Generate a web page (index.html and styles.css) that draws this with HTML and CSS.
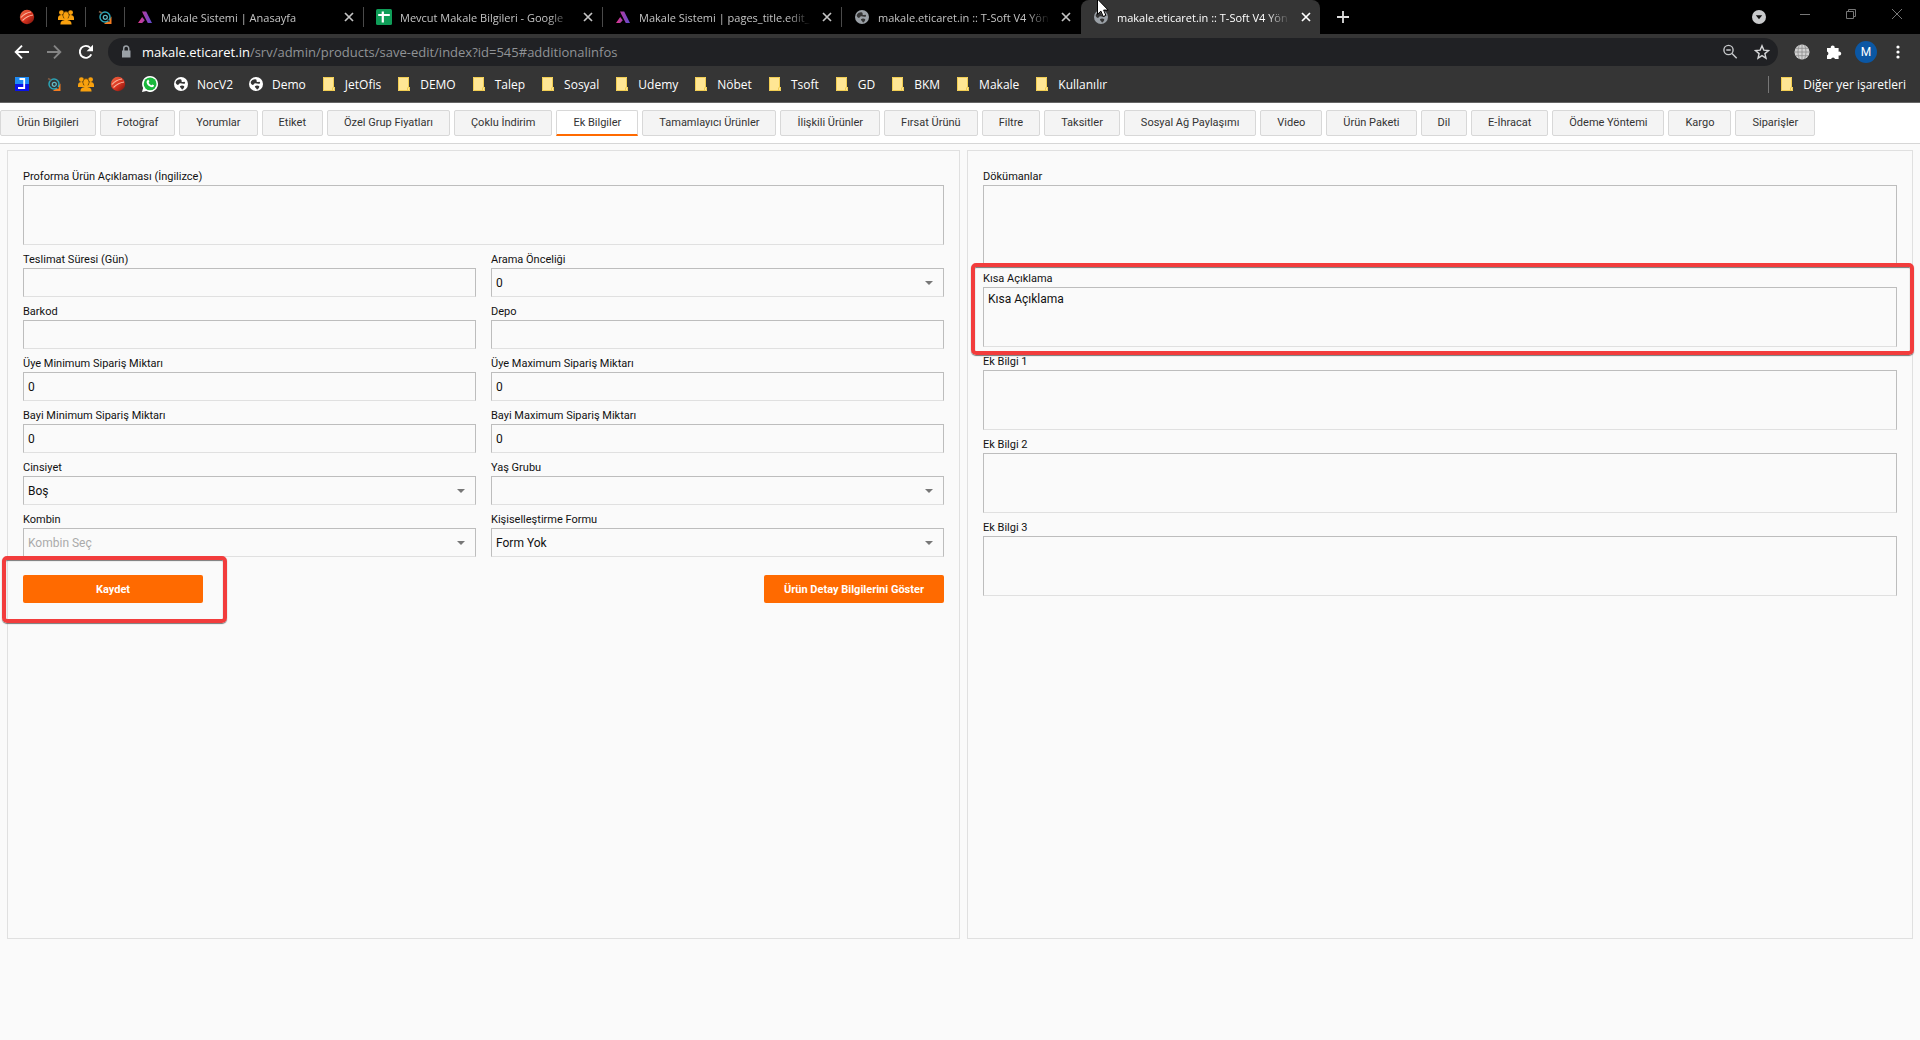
FILE: index.html
```html
<!DOCTYPE html>
<html lang="tr">
<head>
<meta charset="utf-8">
<title>makale.eticaret.in :: T-Soft V4 Yönetim</title>
<meta name="viewport" content="width=device-width, initial-scale=1">
<link rel="stylesheet" href="styles.css">
</head>
<body>
<svg class="sprite" aria-hidden="true">
  <symbol id="ball" viewBox="0 0 16 16">
    <linearGradient id="bg" x1="0" y1="0" x2="1" y2="1"><stop offset="0" stop-color="#ef6b45"/><stop offset=".55" stop-color="#d8321f"/><stop offset="1" stop-color="#6e120c"/></linearGradient>
    <circle cx="8" cy="8" r="7.200" fill="url(#bg)"/>
    <path d="M2 8.500C5 5 8 3.500 12 3M3.500 11.500C7 8 10 6.500 14 6" fill="none" stroke="#f9b49c" stroke-width="1.100"/>
  </symbol>
  <symbol id="people" viewBox="0 0 16 16">
    <g fill="#f9a10e">
      <circle cx="3.400" cy="3.600" r="2.400"/><circle cx="12.600" cy="3.600" r="2.400"/>
      <path d="M0 11V9c0-2 1.500-3 3.400-3S7 7 7 9v2zM9 11V9c0-2 1.700-3 3.600-3S16 7 16 9v2z"/>
      <ellipse cx="8" cy="6.300" rx="3.100" ry="3.700" stroke="#3a2a08" stroke-width=".6"/>
      <path d="M2.400 15.500c0-3 1.600-3.900 3.900-4.200V9h3.400v2.300c2.300.3 3.900 1.200 3.900 4.200z"/>
    </g>
  </symbol>
  <symbol id="search-q" viewBox="0 0 16 16">
    <path d="M7 15h7.500V7.500z" fill="#f47b20"/>
    <circle cx="8" cy="8" r="5" fill="none" stroke="#2ba3b5" stroke-width="1.500"/>
    <circle cx="8.300" cy="8.300" r="2" fill="none" stroke="#5fb9c4" stroke-width="1.300"/>
    <path d="M2 2.500l3 1.500" stroke="#7d5a43" stroke-width="1.600"/>
    <path d="M10 10l2.500 2.500" stroke="#1d3540" stroke-width="1.600"/>
  </symbol>
  <symbol id="lambda" viewBox="0 0 16 16">
    <linearGradient id="lg" x1="0" x2="1"><stop offset="0" stop-color="#e0368c"/><stop offset="1" stop-color="#5b4bd0"/></linearGradient>
    <path d="M5 2.500h4.200L15 14h-4.200L6.400 5.500zM5.200 8l2.600 3.200L5.200 14H1z" fill="url(#lg)"/>
  </symbol>
  <symbol id="sheets" viewBox="0 0 16 16">
    <rect width="16" height="16" rx="1.500" fill="#0f9d58"/>
    <path d="M6.800 2.500v11M2.200 6h11.600" stroke="#fff" stroke-width="2.200"/>
  </symbol>
  <symbol id="globe" viewBox="0 0 16 16">
    <circle cx="8" cy="8" r="7" fill="currentColor"/>
    <path d="M3 5.500c1.300-1.800 3.200-2.500 5-2 1.300.5 0 1.500.8 2.200 1 .8 1.800-.5 2.900.2.900.7.200 1.800-1 1.900-1.700.1-2.900-.8-4.200-.3-.9.400-.6 1.400-1.600 1.400S2 7.200 3 5.500zM7 10.300c1-1 3-.9 4-.2.800.8-.3 2-1 3-.6.700-1.400.5-1.600-.4-.2-.8-1.900-1.500-1.400-2.400z" class="cut"/>
  </symbol>
  <symbol id="close" viewBox="0 0 16 16"><path d="M4 4l8 8M12 4l-8 8" stroke="currentColor" stroke-width="1.700"/></symbol>
  <symbol id="folder" viewBox="0 0 16 16">
    <path d="M2 1h11v10h1v4H2z" fill="#ffe694"/><path d="M2.500 1.500h10v10h1v3h-11z" fill="none" stroke="#f1cd52"/><path d="M11.500 11.500v3" stroke="#f1cd52"/>
  </symbol>
</svg>

<header class="browser">
  <div class="tabstrip">
    <div class="pin"><svg class="ic"><use href="#ball"/></svg></div>
    <div class="pin"><svg class="ic"><use href="#people"/></svg></div>
    <div class="pin"><svg class="ic"><use href="#search-q"/></svg></div>
    <div class="btab"><svg class="ic"><use href="#lambda"/></svg><span class="btitle">Makale Sistemi | Anasayfa</span><svg class="ic"><use href="#close"/></svg></div>
    <div class="btab"><svg class="ic"><use href="#sheets"/></svg><span class="btitle">Mevcut Makale Bilgileri - Google</span><svg class="ic"><use href="#close"/></svg></div>
    <div class="btab"><svg class="ic"><use href="#lambda"/></svg><span class="btitle">Makale Sistemi | pages_title.edit_</span><svg class="ic"><use href="#close"/></svg></div>
    <div class="btab last"><svg class="ic globe"><use href="#globe"/></svg><span class="btitle">makale.eticaret.in :: T-Soft V4 Yön</span><svg class="ic"><use href="#close"/></svg></div>
    <div class="btab current"><svg class="ic globe"><use href="#globe"/></svg><span class="btitle">makale.eticaret.in :: T-Soft V4 Yön</span><svg class="ic"><use href="#close"/></svg></div>
    <svg class="ic plus" viewBox="0 0 16 16"><path d="M8 2v12M2 8h12" stroke="#dedede" stroke-width="1.800"/></svg>
    <div class="window">
      <svg class="ic" viewBox="0 0 16 16"><circle cx="8" cy="8" r="7" fill="#c9cacc"/><path d="M4.800 6.200h6.400L8 10.200z" fill="#111"/></svg>
      <svg class="ic up" viewBox="0 0 16 16"><path d="M3 8.500h10" stroke="#777"/></svg>
      <svg class="ic up" viewBox="0 0 16 16"><path d="M3.500 5.500h7v7h-7zM5.500 5.500v-2h7v7h-2" fill="none" stroke="#777"/></svg>
      <svg class="ic up" viewBox="0 0 16 16"><path d="M3 3l10 10M13 3L3 13" stroke="#777"/></svg>
    </div>
  </div>

  <div class="toolbar">
    <svg class="ic" viewBox="0 0 16 16"><path d="M15 8H2M8 1.700L1.700 8 8 14.300" fill="none" stroke="#fff" stroke-width="1.900"/></svg>
    <svg class="ic" viewBox="0 0 16 16"><path d="M1 8h13M8 1.700L14.300 8 8 14.300" fill="none" stroke="#858585" stroke-width="1.900"/></svg>
    <svg class="ic" viewBox="0 0 16 16"><path d="M13.300 10.400A6 6 0 1 1 12.300 3.800" fill="none" stroke="#fff" stroke-width="1.900"/><path d="M15 .8v6.400H8.600z" fill="#fff"/></svg>
    <div class="address">
      <svg class="ic" viewBox="0 0 16 16"><path d="M4 6.500h8.500v7H4z" fill="#9aa0a6"/><path d="M5.700 7V4.600a2.500 2.500 0 0 1 5 0V7" fill="none" stroke="#9aa0a6" stroke-width="1.500"/></svg>
      <span class="url"><b>makale.eticaret.in</b>/srv/admin/products/save-edit/index?id=545#additionalinfos</span>
      <svg class="ic" viewBox="0 0 16 16"><circle cx="6.500" cy="6" r="4.600" fill="none" stroke="#c6c8ca" stroke-width="1.400"/><path d="M4.300 6h4.400M10 9.500l4.700 4.700" stroke="#c6c8ca" stroke-width="1.500"/></svg>
      <svg class="ic" viewBox="0 0 16 16"><path d="M8 1.800l1.800 4.300 4.700.4-3.600 3.100 1.100 4.600L8 11.700l-4 2.500 1.100-4.600L1.500 6.500l4.700-.4z" fill="none" stroke="#d5d6d8" stroke-width="1.400"/></svg>
    </div>
    <svg class="ic" viewBox="0 0 16 16"><circle cx="8" cy="8" r="7.500" fill="#d2d2d2"/><path d="M8 .5v15M.5 8h15M2 4.300h12M2 11.700h12M5.500 1c-2 4-2 10 0 14M10.500 1c2 4 2 10 0 14" fill="none" stroke="#8b8b8b" stroke-width=".8"/></svg>
    <svg class="ic" viewBox="0 0 16 16"><path d="M1 4h3.800a2 2 0 1 1 3.800 0h4v3.700a2 2 0 1 1 0 3.800V15H9a2 2 0 0 0-3.900 0H1v-3.600a2 2 0 0 0 0-3.800z" fill="#fff"/></svg>
    <span class="avatar">M</span>
    <svg class="ic" viewBox="0 0 16 16"><g fill="#fff"><circle cx="8" cy="3" r="1.600"/><circle cx="8" cy="8" r="1.600"/><circle cx="8" cy="13" r="1.600"/></g></svg>
  </div>

  <nav class="bookmarks">
    <div class="icons">
      <svg class="ic" viewBox="0 0 16 16"><path d="M1 1h14v14H1z" fill="#0a12e8"/><path d="M1 1h14v7H1z" fill="#1f8bf5"/><path d="M5.500 3h4.700v9H4" fill="none" stroke="#fff" stroke-width="1.800"/></svg>
      <svg class="ic"><use href="#search-q"/></svg>
      <svg class="ic"><use href="#people"/></svg>
      <svg class="ic"><use href="#ball"/></svg>
      <svg class="ic" viewBox="0 0 16 16"><path d="M8 0a8 8 0 1 1-3.700 15.100L0 16l1.100-4A8 8 0 0 1 8 0z" fill="#fff"/><circle cx="8.100" cy="7.900" r="6.400" fill="#19b83c"/><path d="M5.500 4.200c.5-.5 1-.4 1.200.1l.6 1.300c.1.500-.6.900-.7 1.200.6 1.300 1.500 2 2.700 2.500.4-.1.700-1 1.100-.9l1.500.8c.3.300.1 1-.3 1.400-1 .9-2.300.7-3.700 0C6 9.600 4.800 8 4.600 6.600c-.1-1 .3-1.900.9-2.400z" fill="#fff"/></svg>
    </div>
    <a class="mark" href="#"><svg class="ic"><use href="#globe"/></svg>NocV2</a>
    <a class="mark" href="#"><svg class="ic"><use href="#globe"/></svg>Demo</a>
    <a class="mark" href="#"><svg class="ic"><use href="#folder"/></svg>JetOfis</a>
    <a class="mark" href="#"><svg class="ic"><use href="#folder"/></svg>DEMO</a>
    <a class="mark" href="#"><svg class="ic"><use href="#folder"/></svg>Talep</a>
    <a class="mark" href="#"><svg class="ic"><use href="#folder"/></svg>Sosyal</a>
    <a class="mark" href="#"><svg class="ic"><use href="#folder"/></svg>Udemy</a>
    <a class="mark" href="#"><svg class="ic"><use href="#folder"/></svg>Nöbet</a>
    <a class="mark" href="#"><svg class="ic"><use href="#folder"/></svg>Tsoft</a>
    <a class="mark" href="#"><svg class="ic"><use href="#folder"/></svg>GD</a>
    <a class="mark" href="#"><svg class="ic"><use href="#folder"/></svg>BKM</a>
    <a class="mark" href="#"><svg class="ic"><use href="#folder"/></svg>Makale</a>
    <a class="mark" href="#"><svg class="ic"><use href="#folder"/></svg>Kullanılır</a>
    <a class="mark other" href="#"><svg class="ic"><use href="#folder"/></svg>Diğer yer işaretleri</a>
  </nav>
  <svg class="cursor" viewBox="0 0 12 18"><path d="M.5-1v15.300l3.400-3.200 2.300 5.400 2.700-1.100-2.300-5.300h4.600z" fill="#fff" stroke="#000"/></svg>
</header>

<nav class="tabs">
  <a href="#">Ürün Bilgileri</a>
  <a href="#">Fotoğraf</a>
  <a href="#">Yorumlar</a>
  <a href="#">Etiket</a>
  <a href="#">Özel Grup Fiyatları</a>
  <a href="#">Çoklu İndirim</a>
  <a href="#" class="active">Ek Bilgiler</a>
  <a href="#">Tamamlayıcı Ürünler</a>
  <a href="#">İlişkili Ürünler</a>
  <a href="#">Fırsat Ürünü</a>
  <a href="#">Filtre</a>
  <a href="#">Taksitler</a>
  <a href="#">Sosyal Ağ Paylaşımı</a>
  <a href="#">Video</a>
  <a href="#">Ürün Paketi</a>
  <a href="#">Dil</a>
  <a href="#">E-İhracat</a>
  <a href="#">Ödeme Yöntemi</a>
  <a href="#">Kargo</a>
  <a href="#">Siparişler</a>
</nav>

<main class="panels">
  <form class="panel">
    <div class="fields">
      <div class="field wide"><label for="proforma">Proforma Ürün Açıklaması (İngilizce)</label><textarea id="proforma"></textarea></div>
      <div class="field"><label for="teslimat">Teslimat Süresi (Gün)</label><input id="teslimat" type="text"></div>
      <div class="field"><label for="arama">Arama Önceliği</label><div class="select"><select id="arama"><option>0</option></select></div></div>
      <div class="field"><label for="barkod">Barkod</label><input id="barkod" type="text"></div>
      <div class="field"><label for="depo">Depo</label><input id="depo" type="text"></div>
      <div class="field"><label for="uye-min">Üye Minimum Sipariş Miktarı</label><input id="uye-min" type="text" value="0"></div>
      <div class="field"><label for="uye-max">Üye Maximum Sipariş Miktarı</label><input id="uye-max" type="text" value="0"></div>
      <div class="field"><label for="bayi-min">Bayi Minimum Sipariş Miktarı</label><input id="bayi-min" type="text" value="0"></div>
      <div class="field"><label for="bayi-max">Bayi Maximum Sipariş Miktarı</label><input id="bayi-max" type="text" value="0"></div>
      <div class="field"><label for="cinsiyet">Cinsiyet</label><div class="select"><select id="cinsiyet"><option>Boş</option></select></div></div>
      <div class="field"><label for="yas">Yaş Grubu</label><div class="select"><select id="yas"><option></option></select></div></div>
      <div class="field"><label for="kombin">Kombin</label><div class="select"><select id="kombin" class="empty"><option>Kombin Seç</option></select></div></div>
      <div class="field"><label for="kisisel">Kişiselleştirme Formu</label><div class="select"><select id="kisisel"><option>Form Yok</option></select></div></div>
    </div>
    <div class="actions">
      <div class="marked save"><button type="button">Kaydet</button></div>
      <button type="button">Ürün Detay Bilgilerini Göster</button>
    </div>
  </form>
  <form class="panel">
    <div class="fields single">
      <div class="field"><label for="dokuman">Dökümanlar</label><textarea id="dokuman" class="tall"></textarea></div>
      <div class="field marked short"><label for="kisa">Kısa Açıklama</label><textarea id="kisa">Kısa Açıklama</textarea></div>
      <div class="field"><label for="ek1">Ek Bilgi 1</label><textarea id="ek1"></textarea></div>
      <div class="field"><label for="ek2">Ek Bilgi 2</label><textarea id="ek2"></textarea></div>
      <div class="field"><label for="ek3">Ek Bilgi 3</label><textarea id="ek3"></textarea></div>
    </div>
  </form>
</main>
</body>
</html>
```
FILE: styles.css
```css
* { box-sizing: border-box; }

body {
  margin: 0;
  min-height: 100vh;
  display: flex;
  flex-direction: column;
  background: #fafafa;
  color: #111;
  font-family: Roboto, "Liberation Sans", sans-serif;
  font-size: 11px;
}

a { color: inherit; text-decoration: none; }
.sprite { position: absolute; width: 0; height: 0; }
.ic { width: 16px; height: 16px; flex: none; }

/* Browser frame */
.browser {
  position: relative;
  background: #353535;
  border-bottom: 1px solid #666;
  color: #fff;
  font-family: "Open Sans", "Noto Sans", sans-serif;
  font-size: 12px;
}
.tabstrip {
  display: flex;
  align-items: center;
  height: 34px;
  padding-left: 8px;
  background: #000;
  font-size: 11px;
}
.pin {
  width: 39px;
  height: 20px;
  display: flex;
  align-items: center;
  justify-content: center;
  border-right: 1px solid #4a4a4a;
}
.btab {
  width: 239px;
  height: 20px;
  display: flex;
  align-items: center;
  gap: 8px;
  padding: 0 6px 0 12px;
  border-right: 1px solid #4a4a4a;
  color: #c4c4c4;
}
.btab.last { border-color: transparent; }
.btab.current {
  height: 34px;
  border: 0;
  border-radius: 8px 8px 0 0;
  background: #353535;
  color: #fff;
}
.btitle {
  flex: 1;
  min-width: 0;
  white-space: nowrap;
  mask-image: linear-gradient(90deg, #000 86%, transparent);
}
.globe { color: #9aa0a6; }
.cut { fill: #353535; }
.plus { margin-left: 15px; }
.window {
  flex: 1;
  display: flex;
  justify-content: flex-end;
  gap: 30px;
  padding-right: 15px;
}
.up { margin-top: -3px; }

.toolbar {
  display: flex;
  align-items: center;
  gap: 16px;
  padding: 4px 14px 0;
}
.address {
  flex: 1;
  display: flex;
  align-items: center;
  gap: 8px;
  height: 28px;
  margin-left: -2px;
  padding: 0 8px 0 10px;
  border-radius: 14px;
  background: #202124;
}
.url { flex: 1; color: #909396; font-size: 13px; }
.url b { color: #fff; font-weight: 400; }
.address .url ~ .ic + .ic { margin-left: 8px; }
.avatar {
  width: 22px;
  height: 22px;
  margin: 0 -3px;
  border-radius: 50%;
  background: #0b57a4;
  font-family: Roboto, sans-serif;
  line-height: 22px;
  text-align: center;
}
.bookmarks {
  display: flex;
  align-items: center;
  gap: 15px;
  height: 36px;
  padding: 0 14px;
}
.icons { display: flex; gap: 16px; }
.mark { display: flex; align-items: center; gap: 8px; white-space: nowrap; }
.other {
  margin-left: auto;
  padding-left: 10px;
  border-left: 1px solid #777;
}
.cursor {
  position: absolute;
  left: 1097px;
  top: 0;
  width: 12px;
  height: 18px;
}

/* Section tabs */
.tabs {
  display: flex;
  gap: 4px;
  padding: 7px 0;
  background: #fff;
  border-bottom: 1px solid #d6d6d6;
}
.tabs a {
  height: 26px;
  padding: 0 16px;
  border: 1px solid #d8d8d8;
  border-radius: 2px;
  background: #f4f4f4;
  color: #333;
  line-height: 23px;
  white-space: nowrap;
}
.tabs .active {
  background: #fff;
  border-bottom: 2px solid #ff6a00;
  border-radius: 2px 2px 0 0;
}

/* Form panels */
.panels {
  display: grid;
  grid-template-columns: 953fr 946fr;
  gap: 7px;
  padding: 6px 7px;
  min-height: 77vh;
}
.panel {
  padding: 18px 15px;
  border: 1px solid #e0e0e0;
}
.fields {
  display: grid;
  grid-template-columns: 1fr 1fr;
  gap: 7px 15px;
}
.fields.single { grid-template-columns: 1fr; }
.wide { grid-column: 1 / -1; }
.field { display: flex; flex-direction: column; }
label { line-height: 16px; }

input, textarea, select {
  width: 100%;
  height: 29px;
  margin: 0;
  padding: 0 4px;
  border: 1px solid #bdbdbd;
  border-bottom-color: #e0e0e0;
  border-radius: 0;
  background: transparent;
  color: #111;
  font: 12px Roboto, "Liberation Sans", sans-serif;
  appearance: none;
  resize: none;
}
textarea { height: 60px; padding-top: 4px; }
.tall { height: 79px; }
.empty { color: #aaa; }
.select { position: relative; }
.select::after {
  content: "";
  position: absolute;
  right: 11px;
  top: 13px;
  border: 4px solid transparent;
  border-top-color: #777;
  border-bottom: 0;
}

.actions {
  display: flex;
  justify-content: space-between;
  padding-top: 18px;
}
button {
  width: 180px;
  height: 28px;
  padding: 0;
  border: 0;
  border-radius: 2px;
  background: #ff6a00;
  color: #fff;
  font: 700 11px Roboto, "Liberation Sans", sans-serif;
}

/* Red callout frames drawn over the form */
.marked { position: relative; }
.marked::after {
  content: "";
  position: absolute;
  border: 4px solid #f23c3c;
  border-radius: 5px;
  box-shadow: 0 1px 1px #777, inset 0 1px 1px #777;
  pointer-events: none;
}
.save::after { inset: -19px -24px -20px -21px; }
.short::after { inset: -8px -17px -8px -12px; }
```
